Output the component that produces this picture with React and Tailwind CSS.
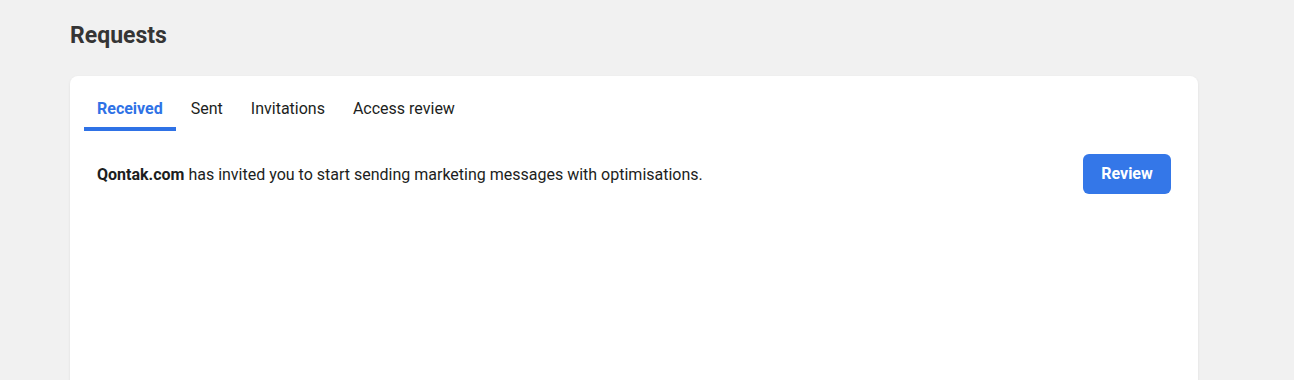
export default function App() {
  const tabs = ["Received", "Sent", "Invitations", "Access review"];
  return (
    <div className="min-h-screen bg-[#f1f1f1] px-[70px] pt-[21px] font-['Roboto',sans-serif] overflow-hidden h-[380px]">
      <h1 className="text-[23px] font-bold leading-[28px] text-[#353535] pt-[1px]">Requests</h1>
      <div className="mt-[26px] w-[1128px] h-[400px] bg-white rounded-[8px] shadow-[0_1px_3px_rgba(0,0,0,0.08)]">
        <div className="flex gap-[2px] pl-[14px] pt-[21px]">
          {tabs.map((t, i) => (
            <div
              key={t}
              className={
                i === 0
                  ? "px-[13px] pb-[6px] leading-[24px] text-[16px] font-bold text-[#2f72e6] border-b-[4px] border-[#2f72e6]"
                  : "px-[13px] pb-[6px] leading-[24px] text-[16px] text-[#1c1e21] border-b-[4px] border-transparent"
              }
            >
              {t}
            </div>
          ))}
        </div>
        <div className="flex items-center justify-between px-[27px] mt-[23px]">
          <p className="text-[16px] text-[#1c1e21] pt-[2px]">
            <span className="font-bold">Qontak.com</span> has invited you to start sending marketing messages with optimisations.
          </p>
          <button className="h-[40px] w-[88px] rounded-[6px] bg-[#3477e8] text-white text-[16px] font-bold">
            Review
          </button>
        </div>
      </div>
    </div>
  );
}
